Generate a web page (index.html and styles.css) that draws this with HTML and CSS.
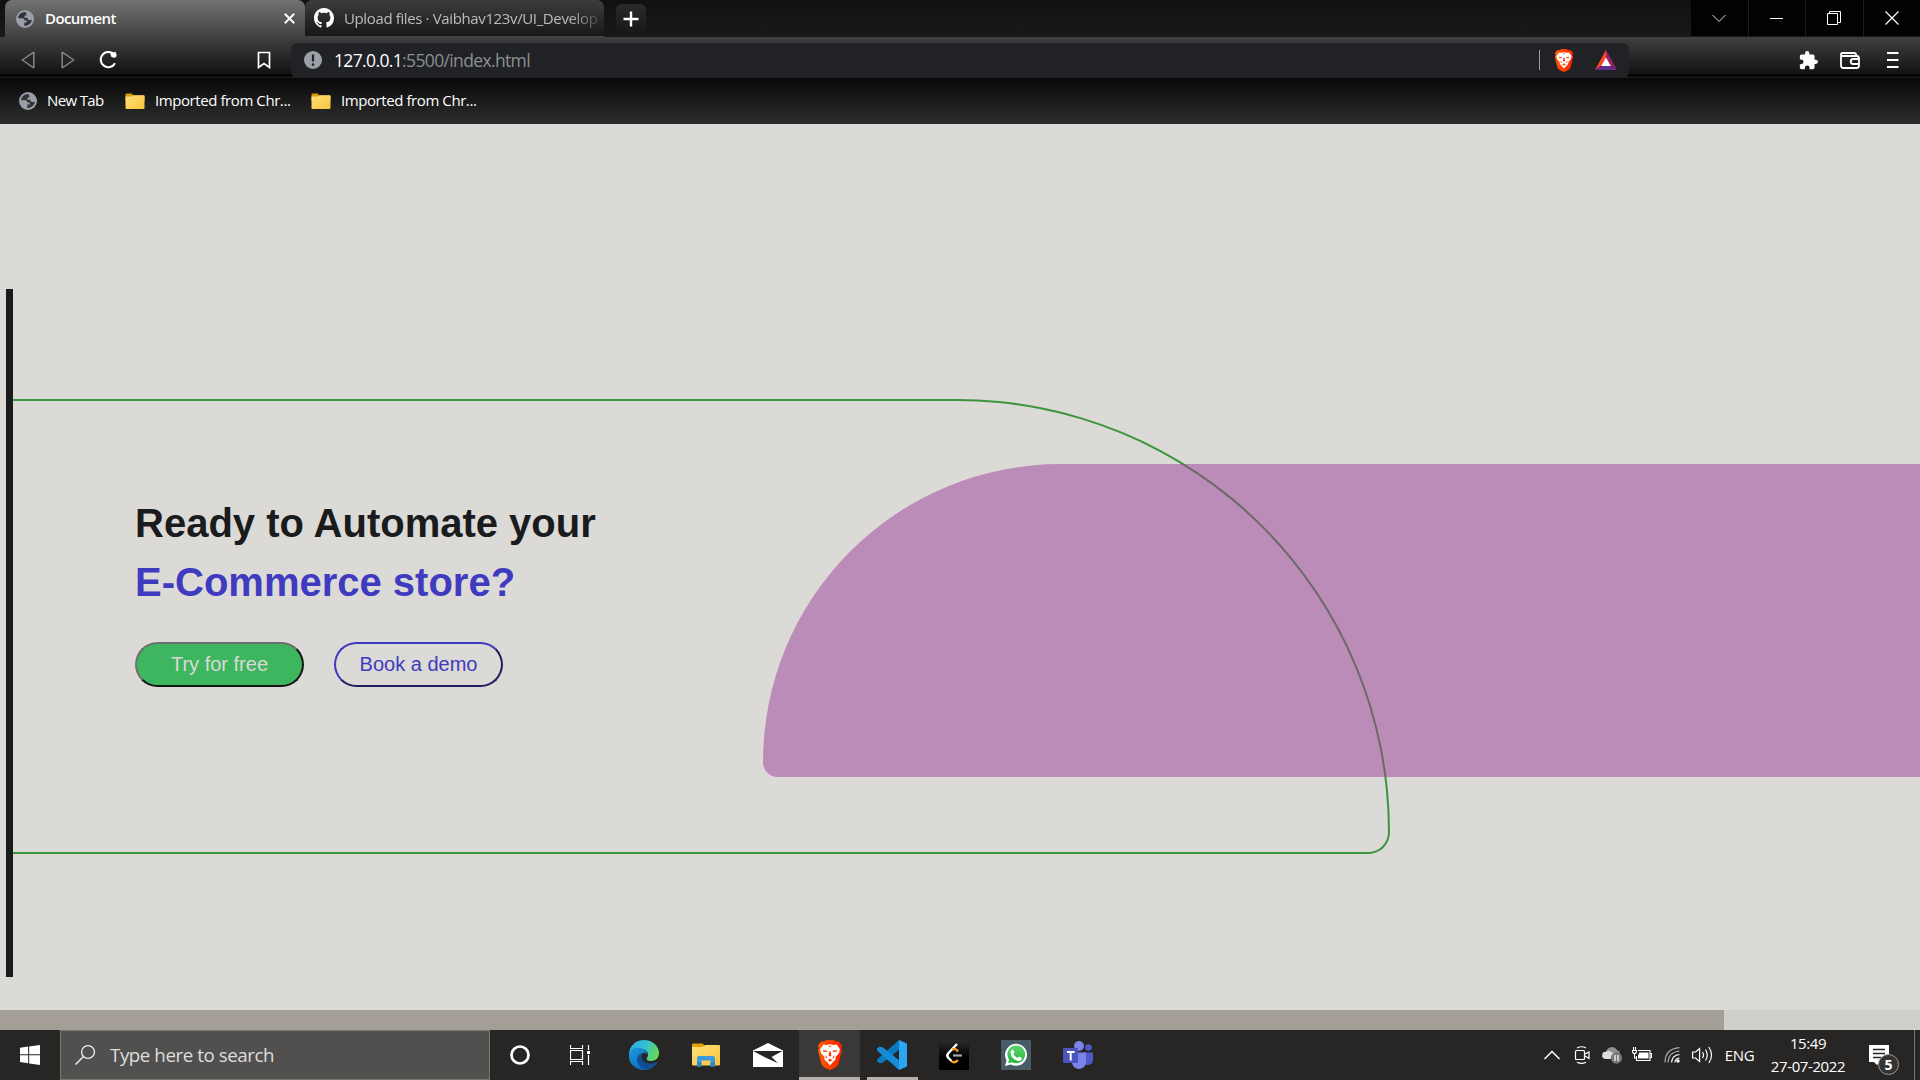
FILE: index.html
```html
<!DOCTYPE html>
<html lang="en">
<head>
<meta charset="utf-8">
<title>Document</title>
<link rel="stylesheet" href="styles.css">
</head>
<body>
<svg class="defs" width="0" height="0" aria-hidden="true">
  <defs>
    <linearGradient id="gold" x1="0" y1="0" x2="1" y2="1"><stop offset="0" stop-color="#ffe07a"/><stop offset="1" stop-color="#f8c43c"/></linearGradient>
    <linearGradient id="flame" x1="0" x2="1"><stop offset="0" stop-color="#ff5a00"/><stop offset="1" stop-color="#ff2000"/></linearGradient>
    <linearGradient id="edgeTop" x1="0" y1=".3" x2="1" y2=".6"><stop offset="0" stop-color="#2ba8e6"/><stop offset=".5" stop-color="#34c1d0"/><stop offset="1" stop-color="#66dc4c"/></linearGradient>
    <linearGradient id="edgeLow" x1="0" y1="0" x2="1" y2="1"><stop offset="0" stop-color="#1b9de2"/><stop offset="1" stop-color="#0a59a8"/></linearGradient>
    <linearGradient id="night" x1="0" y1="0" x2="0" y2="1"><stop offset="0" stop-color="#2b2b2b"/><stop offset=".6" stop-color="#000"/></linearGradient>
    <linearGradient id="chat" x1="0" y1="0" x2="0" y2="1"><stop offset="0" stop-color="#5fd66c"/><stop offset="1" stop-color="#27b43f"/></linearGradient>
    <symbol id="globe" viewBox="0 0 18 18">
      <circle cx="9" cy="9" r="9" fill="#9aa0a9"/>
      <path d="M9.500 2c-3.800-.3-7 2.600-7.500 6.200h4.200c1.600 0 2.300 1.100 2.300 2.300h2.200v1.900H8.300v3.500c3.900.3 7.300-2.500 7.700-6.300-.8.500-1.700.6-2.700.5-1.500-.2-1.900-1.200-1.900-2.300H8.500V5.500h1.900c.2-1.200-.1-2.300-.9-3.500z" fill="#333438"/>
    </symbol>
    <symbol id="folder" viewBox="0 0 20 17">
      <path d="M.5 1.500Q.5.500 1.500.500h5.300l1.600 2H19q.6 0 .6 1V8H.5z" fill="#d99a0b"/>
      <path d="M.5 3.500h6.600l1.400-1.200h10q1 0 1 1v11.800q0 1-1 1H1.500q-1 0-1-1z" fill="url(#gold)"/>
    </symbol>
    <symbol id="lion" viewBox="0 0 26 30">
      <path d="M7 1.500 9.500 0h7L19 1.500l2.500-.3L25 5.200l-.8 2.600.8 2.700-3.400 13.300Q21 26 17.500 28L13 30l-4.500-2Q5 26 4.400 23.800L1 10.500l.8-2.700L1 5.200l3.500-4z" fill="url(#flame)"/>
      <path d="M6.300 4.500 9.500 5l3.500-.8 3.500.8 3.200-.5 3.200 4.700-.8 3.800-3.300 3.800-.5 3.200-2.200 1.800L13 25.500l-3.100-3.700L7.700 20l-.5-3.200L3.900 13l-.8-3.800z" fill="#fff"/>
      <path d="M6 10 11 11l-1.600 1-2.900-.3zM20 10 15 11l1.600 1 2.900-.3zM11.200 5.800h3.600l-1 1h-1.600zM12.200 11.500h1.600l.6 4-1.400 1.200-1.400-1.200zM8.300 15l2.200 2.700-1.500.7zM17.700 15l-2.200 2.700 1.500.7zM10.600 20l2.400-1.200 2.400 1.200-2.400 1.700z" fill="#ff3c00"/>
    </symbol>
  </defs>
</svg>

<header class="tabstrip">
  <div class="tab tab-active">
    <svg class="globe"><use href="#globe"/></svg>
    <span class="tab-title">Document</span>
    <svg class="tab-close" viewBox="0 0 10 10"><path d="M.7.700 9.300 9.300M9.300.700.700 9.300" stroke="#fff" stroke-width="1.700"/></svg>
  </div>
  <div class="tab tab-idle">
    <svg class="github" viewBox="0 0 16 16"><path fill="#fff" d="M8 0C3.580 0 0 3.580 0 8c0 3.540 2.290 6.530 5.470 7.590.4.070.55-.17.55-.38 0-.19-.01-.82-.01-1.490-2.010.37-2.530-.49-2.690-.94-.09-.23-.48-.94-.82-1.130-.28-.15-.68-.52-.01-.53.63-.01 1.080.58 1.230.82.72 1.210 1.870.87 2.330.66.070-.52.28-.87.51-1.070-1.780-.2-3.640-.89-3.640-3.950 0-.87.31-1.590.82-2.150-.08-.2-.36-1.020.08-2.120 0 0 .67-.21 2.200.82.640-.18 1.320-.27 2-.27s1.360.09 2 .27c1.530-1.040 2.200-.82 2.200-.82.440 1.100.16 1.920.08 2.120.51.56.82 1.270.82 2.150 0 3.070-1.870 3.750-3.650 3.950.29.25.54.73.54 1.480 0 1.070-.01 1.930-.01 2.200 0 .21.15.46.55.38A8.010 8.010 0 0 0 16 8c0-4.420-3.580-8-8-8z"/></svg>
    <span class="tab-title idle-title">Upload files · Vaibhav123v/UI_Develop</span>
  </div>
  <div class="new-tab"><svg width="16" height="16" viewBox="0 0 16 16"><path d="M8 .500v15M.500 8h15" stroke="#fff" stroke-width="2.400"/></svg></div>
  <div class="window-controls">
    <div class="control"><svg width="14" height="14" viewBox="0 0 14 14"><path d="M.500 4 7 10.500 13.500 4" fill="none" stroke="#ddd" stroke-width="1"/></svg></div>
    <div class="control"><svg width="14" height="14" viewBox="0 0 14 14"><path d="M0 7.500h13" stroke="#fff"/></svg></div>
    <div class="control"><svg width="14" height="14" viewBox="0 0 14 14"><path d="M.500 2.500h10v11H.500zM2.500 2.500V.500h11v11h-3" fill="none" stroke="#fff"/></svg></div>
    <div class="control"><svg width="14" height="14" viewBox="0 0 14 14"><path d="m.500.500 13 13m0-13-13 13" stroke="#fff" stroke-width="1.200"/></svg></div>
  </div>
</header>

<nav class="toolbar">
  <svg class="back" viewBox="0 0 14 18"><path d="M12.800 1.200v15.600L1.200 9z" fill="none" stroke="#858585" stroke-width="1.500" stroke-linejoin="round"/></svg>
  <svg class="forward" viewBox="0 0 14 18"><path d="M1.200 1.200v15.600L12.800 9z" fill="none" stroke="#858585" stroke-width="1.500" stroke-linejoin="round"/></svg>
  <svg class="reload" viewBox="0 0 18 18"><path d="M15.400 4A7.600 7.600 0 1 0 16 12.200" fill="none" stroke="#fff" stroke-width="2.100"/><path d="M11.200 2.500 16.800.800v5.400L12.500 6z" fill="#fff"/><circle cx="15" cy="4" r="2.600" fill="#fff"/></svg>
  <svg class="mark" viewBox="0 0 14 18"><path d="M1.500 1.500h11v15L7 12.600l-5.500 3.900z" fill="none" stroke="#fff" stroke-width="1.700"/></svg>
  <div class="address">
    <svg class="info" viewBox="0 0 18 18"><circle cx="9" cy="9" r="9" fill="#9ba0a8"/><path d="M9 3.500v7" stroke="#202226" stroke-width="2.200"/><circle cx="9" cy="13.600" r="1.300" fill="#202226"/></svg>
    <span class="url"><span class="host">127.0.0.1</span><span class="path">:5500/index.html</span></span>
    <span class="divider"></span>
    <svg class="shield"><use href="#lion"/></svg>
    <svg class="rewards" viewBox="0 0 22 20"><path d="M11 0 0 20l7-5 4-7z" fill="#ff4724"/><path d="m11 0 11 20-7-5-4-7z" fill="#9e1f63"/><path d="M0 20h22l-6.500-4.500h-9z" fill="#662d91"/><path d="m11 7.500 4.800 8.500H6.200z" fill="#fff"/></svg>
  </div>
  <svg class="puzzle" viewBox="1 1 22 22"><path fill="#fff" d="M20.500 11H19V7c0-1.100-.9-2-2-2h-4V3.500a2.500 2.500 0 0 0-5 0V5H4c-1.100 0-1.990.9-1.990 2v3.800H3.500a2.700 2.700 0 0 1 0 5.400H2V20c0 1.100.9 2 2 2h3.800v-1.500a2.700 2.700 0 0 1 5.400 0V22H17c1.100 0 2-.9 2-2v-4h1.500a2.500 2.500 0 0 0 0-5z"/></svg>
  <svg class="wallet" viewBox="0 0 20 17"><path d="M1 3.500v10q0 2.500 2.500 2.500h13q2.500 0 2.500-2.500v-7q0-2.500-2.500-2.500H2.500Q1 4 1 2.500T2.500 1H14q2 0 2.200 2M18.500 7h-5.300a2.500 2.500 0 0 0 0 5h5.300" fill="none" stroke="#fff" stroke-width="1.800"/></svg>
  <svg class="menu" viewBox="0 0 12 16"><path d="M0 1h11.500M0 8h11.500M0 15h11.500" stroke="#fff" stroke-width="2"/></svg>
</nav>

<nav class="bookmarks">
  <svg class="globe"><use href="#globe"/></svg><span class="bookmark first">New Tab</span>
  <svg class="folder"><use href="#folder"/></svg><span class="bookmark second">Imported from Chr...</span>
  <svg class="folder"><use href="#folder"/></svg><span class="bookmark">Imported from Chr...</span>
</nav>

<main class="page">
  <section class="banner">
    <div class="outline">
      <h1>Ready to Automate your<br><span>E-Commerce store?</span></h1>
      <div class="actions">
        <button class="try">Try for free</button>
        <button class="demo">Book a demo</button>
      </div>
    </div>
    <div class="swoosh"></div>
  </section>
  <div class="scrollbar"><div class="thumb"></div></div>
</main>

<footer class="taskbar">
  <div class="start"><svg width="20" height="20" viewBox="0 0 20 20"><path d="M0 2.800 8.200 1.600v7.700H0zM9.200 1.500 20 0v9.300H9.200zM0 10.300h8.200v7.900L0 17zM9.200 10.300H20V20L9.200 18.400z" fill="#fff"/></svg></div>
  <div class="search"><svg width="20" height="20" viewBox="0 0 20 20"><circle cx="13" cy="7" r="6.400" fill="none" stroke="#eee" stroke-width="1.300"/><path d="M8.500 11.500.500 19.500" stroke="#eee" stroke-width="1.500"/></svg><span>Type here to search</span></div>
  <div class="system-slot"><svg width="20" height="20" viewBox="0 0 20 20"><circle cx="10" cy="10" r="8.500" fill="none" stroke="#fff" stroke-width="2.700"/></svg></div>
  <div class="system-slot view-slot"><svg width="20" height="20" viewBox="0 0 20 20"><path d="M.500 0v3.500h12V0M.500 5.500h12v9H.500zM.500 20v-3.500h12V20M18.500 0v5M18.500 10v10" fill="none" stroke="#fff" stroke-width="1.200"/><path d="M17 6h3v3h-3z" fill="#fff"/></svg></div>
  <div class="app"><svg width="30" height="30" viewBox="0 0 30 30"><path d="M0 15C0 6 6.500 0 15 0c9 0 15 6.500 15 13 0 5-3.500 8-8 8-4 0-5-1.500-4-3 2.500-4 .5-8-5-9C7 8 1.500 10 0 15z" fill="url(#edgeTop)"/><path d="M0 15C.500 9.500 6 7 11 8c4.500.8 7.500 4 7 7-.5-1.700-2-2.500-3.500-2-3.500 1-5 5-3 9 2.300 4.800 8 6 13 4.200C22 29 18.500 30 15 30 6 30-.500 23 0 15z" fill="url(#edgeLow)"/><path d="M14.500 13c-5.500 0-7.500 5.500-5.500 10 2 4.500 6.500 7 11 6.200 4-1.200 6.500-3.700 8-6.200.4-.8-.3-1.200-1-.8-7 3.300-14.500-.2-14.500-5.200 0-1.800.8-3.100 2-4z" fill="#104f94"/></svg></div>
  <div class="app"><svg width="28" height="24" viewBox="0 0 28 24"><path d="M0 1.500Q0 .500 1 .500h10l2 3.500H0z" fill="#e2a10c"/><path d="M0 4h10.500l2.500-2h14q1 0 1 1v18.500q0 1-1 1H1q-1 0-1-1z" fill="url(#gold)"/><path d="M5 23.500V15q0-2 2-2h14q2 0 2 2v8.500h-4.500v-6h-9v6z" fill="#3b99dc"/><path d="M5 19h4.500v4.500H5zM18.500 19H23v4.500h-4.500z" fill="#2e85cb"/></svg></div>
  <div class="app"><svg width="30" height="24" viewBox="0 0 30 24"><path d="M0 7.500 15 0l15 7.500V24H0z" fill="#fff"/><path d="M0 8h29.500l-11 6 6.500 6.200L13.500 15z" fill="#272624"/></svg></div>
  <div class="app running current"><svg width="26" height="30"><use href="#lion"/></svg></div>
  <div class="app running"><svg width="30" height="30" viewBox="0 0 30 30"><path d="M22 0 0 19.500v2.200l2.500 1.500 3.200-.4L23 9z" fill="#0a79bf"/><path d="M22 30 0 10.500V8.300l2.500-1.500 3.200.4L23 21z" fill="#168cd8"/><path d="m22 0 8 3.500v23L22 30z" fill="#2ba6f2"/></svg></div>
  <div class="app"><svg width="30" height="30" viewBox="0 0 30 30"><path d="M0 0h30v30H0z" fill="url(#night)"/><path d="m18 4-8.500 9q-2.500 2.500 0 5l3 3" fill="none" stroke="#fff" stroke-width="2.400"/><path d="M13.500 9.500q2.500-2 5.500 2M12 21q3.500 3 7-1" fill="none" stroke="#f5a11c" stroke-width="2.300"/><path d="M14 15.500h9" stroke="#aaa" stroke-width="2.200"/></svg></div>
  <div class="app"><svg width="30" height="30" viewBox="0 0 30 30"><path d="M0 0h30v30H0z" fill="#485c67"/><path d="m4 26 1.600-5.500a11 11 0 1 1 4.200 4z" fill="#fff"/><path d="m7 23 1.200-3.300a8.900 8.900 0 1 1 3 2.500z" fill="url(#chat)"/><path d="M11.800 9.500 13.500 12l-1.200 2q1.600 2.700 4 4l1.700-1.500 3 1.500q-.2 3-3.500 3-7-1.500-8-8.500.300-2.700 2.300-3z" fill="#fff"/></svg></div>
  <div class="app"><svg width="30" height="28" viewBox="0 0 30 28"><circle cx="16" cy="5" r="5" fill="#7b83eb"/><circle cx="25.500" cy="6.500" r="3.300" fill="#5059c9"/><path d="M20 11.500h9q1 0 1 1v6q0 5-5 5.500h-5z" fill="#5059c9"/><path d="M9 11.500h14V20q0 7.500-7 8-6-.5-7-6z" fill="#7b83eb"/><rect y="7" width="15" height="15" rx="1" fill="#4b53bc"/><path d="M4 11h7.500M7.700 11v8.500" stroke="#fff" stroke-width="2"/></svg></div>
  <div class="tray">
    <div class="tray-slot"><svg width="16" height="10" viewBox="0 0 16 10"><path d="M.500 9 8 1.500 15.500 9" fill="none" stroke="#fff" stroke-width="1.500"/></svg></div>
    <div class="tray-slot"><svg width="16" height="18" viewBox="0 0 16 18"><path d="M2.500 4.500h7q1 0 1 1v7q0 1-1 1h-7q-1 0-1-1v-7q0-1 1-1zM11 8l4-2v6.500l-4-2.500M3 2q4.500-2.500 9 0M3 16.200q4.500 2.300 9 0" fill="none" stroke="#fff" stroke-width="1.200"/></svg></div>
    <div class="tray-slot"><svg width="20" height="18" viewBox="0 0 20 18"><path d="M3.500 13A3.700 3.700 0 0 1 4 5.800 6 6 0 0 1 15 4q3.500 1 3 5v4z" fill="#8f8f8f"/><path d="M3.500 13A3.600 3.600 0 0 1 4 5.800q3-1.800 5.700.5L15 10v3z" fill="#ddd"/><circle cx="14.500" cy="12" r="5.700" fill="#777"/><path d="M13 9v6M16 9v6" stroke="#fff" stroke-width="1.200"/></svg></div>
    <div class="tray-slot"><svg width="20" height="16" viewBox="0 0 20 16"><path d="M6 3.500h12v10H4.500V9M18.500 6.500h1v4h-1M1.500 0v3M3.500 0v3M0 3.500h5M.6 3.500v1q0 2 1.900 2t1.900-2v-1M2.500 7v4h2" fill="none" stroke="#fff" stroke-width="1.100"/><path d="M7 5.500h9.500v6H6V8q1-.5 1-2.500z" fill="#fff"/></svg></div>
    <div class="tray-slot"><svg width="16" height="16" viewBox="0 0 16 16"><g fill="none" stroke="#fff" stroke-width="1.200"><path d="M11 15.500q0-4 4.500-4.500M7.500 15.500Q8 8.300 15.500 7.500"/><path d="M4 15.500Q4.500 5 15.500 4M1 15.500Q1 2 15.500.700" stroke="#aaa"/></g><circle cx="14" cy="14" r="1.700" fill="#fff"/></svg></div>
    <div class="tray-slot"><svg width="21" height="18" viewBox="0 0 21 18"><path d="M.600 6h3l4-3.500v13L3.600 12h-3zM10.500 6q2 3 0 6M13.500 3.500q3.500 5.500 0 11M16.800 1q5.500 8 0 16" fill="none" stroke="#fff" stroke-width="1.200"/></svg></div>
    <span class="lang">ENG</span>
    <div class="clock"><span>15:49</span><span class="date">27-07-2022</span></div>
    <div class="notices"><svg width="20" height="20" viewBox="0 0 20 20"><path d="M0 0h20v17h-9l-3 3-3-3H0z" fill="#fff"/><path d="M4 4.500h12M4 8.500h12M4 12.500h8" stroke="#272624" stroke-width="1.300"/></svg><span class="count">5</span></div>
    <span class="show-desktop"></span>
  </div>
</footer>
</body>
</html>
```
FILE: styles.css
```css
* { box-sizing: border-box; }
body {
  margin: 0;
  width: 1920px;
  height: 1080px;
  overflow: hidden;
  display: flex;
  flex-direction: column;
  font-family: "Open Sans", "Noto Sans", sans-serif;
  background: #dbdad6;
  color: #fff;
}
svg { display: block; flex: none; }
.defs { position: absolute; }
span { white-space: nowrap; }

.tabstrip {
  display: flex;
  height: 37px;
  flex: none;
  padding-left: 5px;
  background: linear-gradient(#101010, #191919);
}
.tab { display: flex; align-items: center; height: 37px; }
.tab-active {
  width: 300px;
  padding: 0 10px 0 11px;
  border-radius: 7px 7px 0 0;
  background: linear-gradient(#727272, #414141);
}
.tab-idle {
  width: 299px;
  padding-left: 9px;
  border-radius: 7px 7px 0 0;
  border-bottom: 1px solid #454545;
  background: linear-gradient(#3d3d3d, #171717);
}
.globe { width: 18px; height: 18px; }
.tab-title { margin-left: 11px; padding-bottom: 2px; font-size: 15px; font-weight: 600; letter-spacing: -0.6px; }
.tab-close { width: 11px; height: 11px; margin-left: auto; }
.github { width: 20px; height: 20px; }
.idle-title {
  margin-left: 10px;
  padding-bottom: 0;
  width: 255px;
  overflow: hidden;
  font-weight: 400;
  letter-spacing: -0.37px;
  color: #bcbcbc;
  -webkit-mask-image: linear-gradient(90deg, #000 225px, transparent 262px);
  mask-image: linear-gradient(90deg, #000 225px, transparent 262px);
}
.new-tab {
  display: grid;
  place-items: center;
  width: 30px;
  height: 30px;
  margin: 4px 0 0 12px;
  border-radius: 6px;
  background: linear-gradient(#2b2b2b, #171717);
}
.window-controls { display: flex; margin-left: auto; height: 36px; }
.control {
  display: grid;
  place-items: center;
  width: 57px;
  background: #020202;
}
.control + .control { width: 57.5px; border-left: 1px solid #1d1d1d; }

.toolbar {
  display: flex;
  align-items: center;
  height: 41px;
  flex: none;
  padding: 5px 21px 0 21px;
  background: linear-gradient(#404040, #121212 37px, #000 38px, #000 39px, #1c1c1c 40px);
}
.back, .forward { width: 14px; height: 18px; }
.forward { margin-left: 26px; }
.reload { width: 18px; height: 18px; margin-left: 24px; }
.mark { width: 14px; height: 18px; margin-left: 140px; }
.address {
  display: flex;
  align-items: center;
  width: 1338px;
  height: 35px;
  margin-left: 20px;
  padding: 0 12px 0 13px;
  border-radius: 6px;
  background: #202226;
}
.info { width: 18px; height: 18px; }
.url { margin-left: 12px; font-size: 17.5px; letter-spacing: -0.64px; }
.path { color: #8d8f92; }
.divider { width: 1px; height: 20px; margin-left: auto; background: #999; }
.shield { width: 20px; height: 23px; margin-left: 14px; }
.rewards { width: 22px; height: 20px; margin-left: 21px; }
.puzzle { width: 19px; height: 19px; margin-left: auto; }
.wallet { width: 20px; height: 17px; margin-left: 22px; }
.menu { width: 12px; height: 16px; margin-left: 27px; }

.bookmarks {
  display: flex;
  align-items: center;
  height: 46px;
  flex: none;
  padding-left: 19px;
  background: linear-gradient(#080808, #2e2e2e);
}
.bookmark { margin-left: 10px; padding-bottom: 2px; font-size: 15px; letter-spacing: -0.42px; }
.folder { width: 20px; height: 17px; }
.first { width: 78px; letter-spacing: -0.65px; }
.second { width: 156px; }

.page {
  display: flex;
  flex-direction: column;
  height: 906px;
  flex: none;
  overflow: hidden;
}
.banner {
  display: flex;
  height: 688px;
  width: 1914px;
  margin: 165px 0 0 6px;
  border-left: 7px solid #191b1c;
  position: relative;
  flex: none;
}
.outline {
  width: 1377px;
  height: 455px;
  margin-top: 110px;
  padding: 93px 0 0 122px;
  border: 2px solid #3c943c;
  border-left: 0;
  border-radius: 0 500px 25px 0;
}
.swoosh {
  position: absolute;
  left: 750px;
  top: 175px;
  width: 1157px;
  height: 313px;
  border-radius: 500px 0 0 25px;
  background: rgba(155, 62, 153, 0.5);
}
h1 {
  margin: 0;
  font: bold 40px/59px "Liberation Sans", Arial, sans-serif;
  color: #191b1c;
}
h1 span { color: #3f3abf; }
.actions { display: flex; gap: 30px; margin-top: 30px; }
button {
  width: 169px;
  height: 45px;
  padding: 0;
  border-radius: 25px;
  border: 2px solid;
  font: 20px "Liberation Sans", Arial, sans-serif;
}
.try { color: #dbdad6; background: #3eb65f; border-color: #6f6f6f #151515 #151515 #6f6f6f; }
.demo { color: #3f3abf; background: none; border-color: #3f3abf #1f1d60 #1f1d60 #3f3abf; }
.scrollbar { height: 20px; margin-top: auto; background: #d0cfcb; flex: none; }
.thumb { width: 1724px; height: 20px; background: #a49e97; }

.taskbar {
  display: flex;
  height: 50px;
  flex: none;
  background: #272624;
}
.start, .system-slot { display: grid; place-items: center; width: 60px; }
.search {
  display: flex;
  align-items: center;
  width: 430px;
  padding-left: 14px;
  border: 1px solid #777672;
  background: #51504e;
}
.search span { margin-left: 15px; padding-bottom: 2px; font-size: 18.75px; letter-spacing: -0.45px; color: #dedede; }
.view-slot { width: 59px; margin-right: 4px; }
.app { display: grid; place-items: center; width: 62px; height: 50px; }
.running { background: linear-gradient(#b3b0ad, #b3b0ad) 50% 100% / 51px 3px no-repeat; }
.current { width: 61px; margin-right: 1px; background: linear-gradient(#b3b0ad, #b3b0ad) 50% 100% / 100% 3px no-repeat, #3a3937; }
.view-slot + .app { margin-left: 0; }
.tray { display: flex; margin-left: auto; }
.tray-slot { display: grid; place-items: center; width: 30px; }
.lang { width: 45px; align-self: center; text-align: center; font-size: 15px; letter-spacing: -0.4px; }
.clock {
  display: flex;
  flex-direction: column;
  align-items: center;
  width: 92px;
  font-size: 15px;
  line-height: 23px;
  padding-top: 2px;
  letter-spacing: -0.4px;
}
.notices { position: relative; width: 60px; padding: 15px 0 0 15px; }
.count {
  position: absolute;
  left: 24px;
  top: 24px;
  width: 21px;
  height: 21px;
  border: 1px solid #999;
  border-radius: 50%;
  background: #333;
  font-size: 14px;
  font-weight: 700;
  line-height: 19px;
  text-align: center;
}
.show-desktop { width: 6px; border-left: 1px solid #777; }
```
